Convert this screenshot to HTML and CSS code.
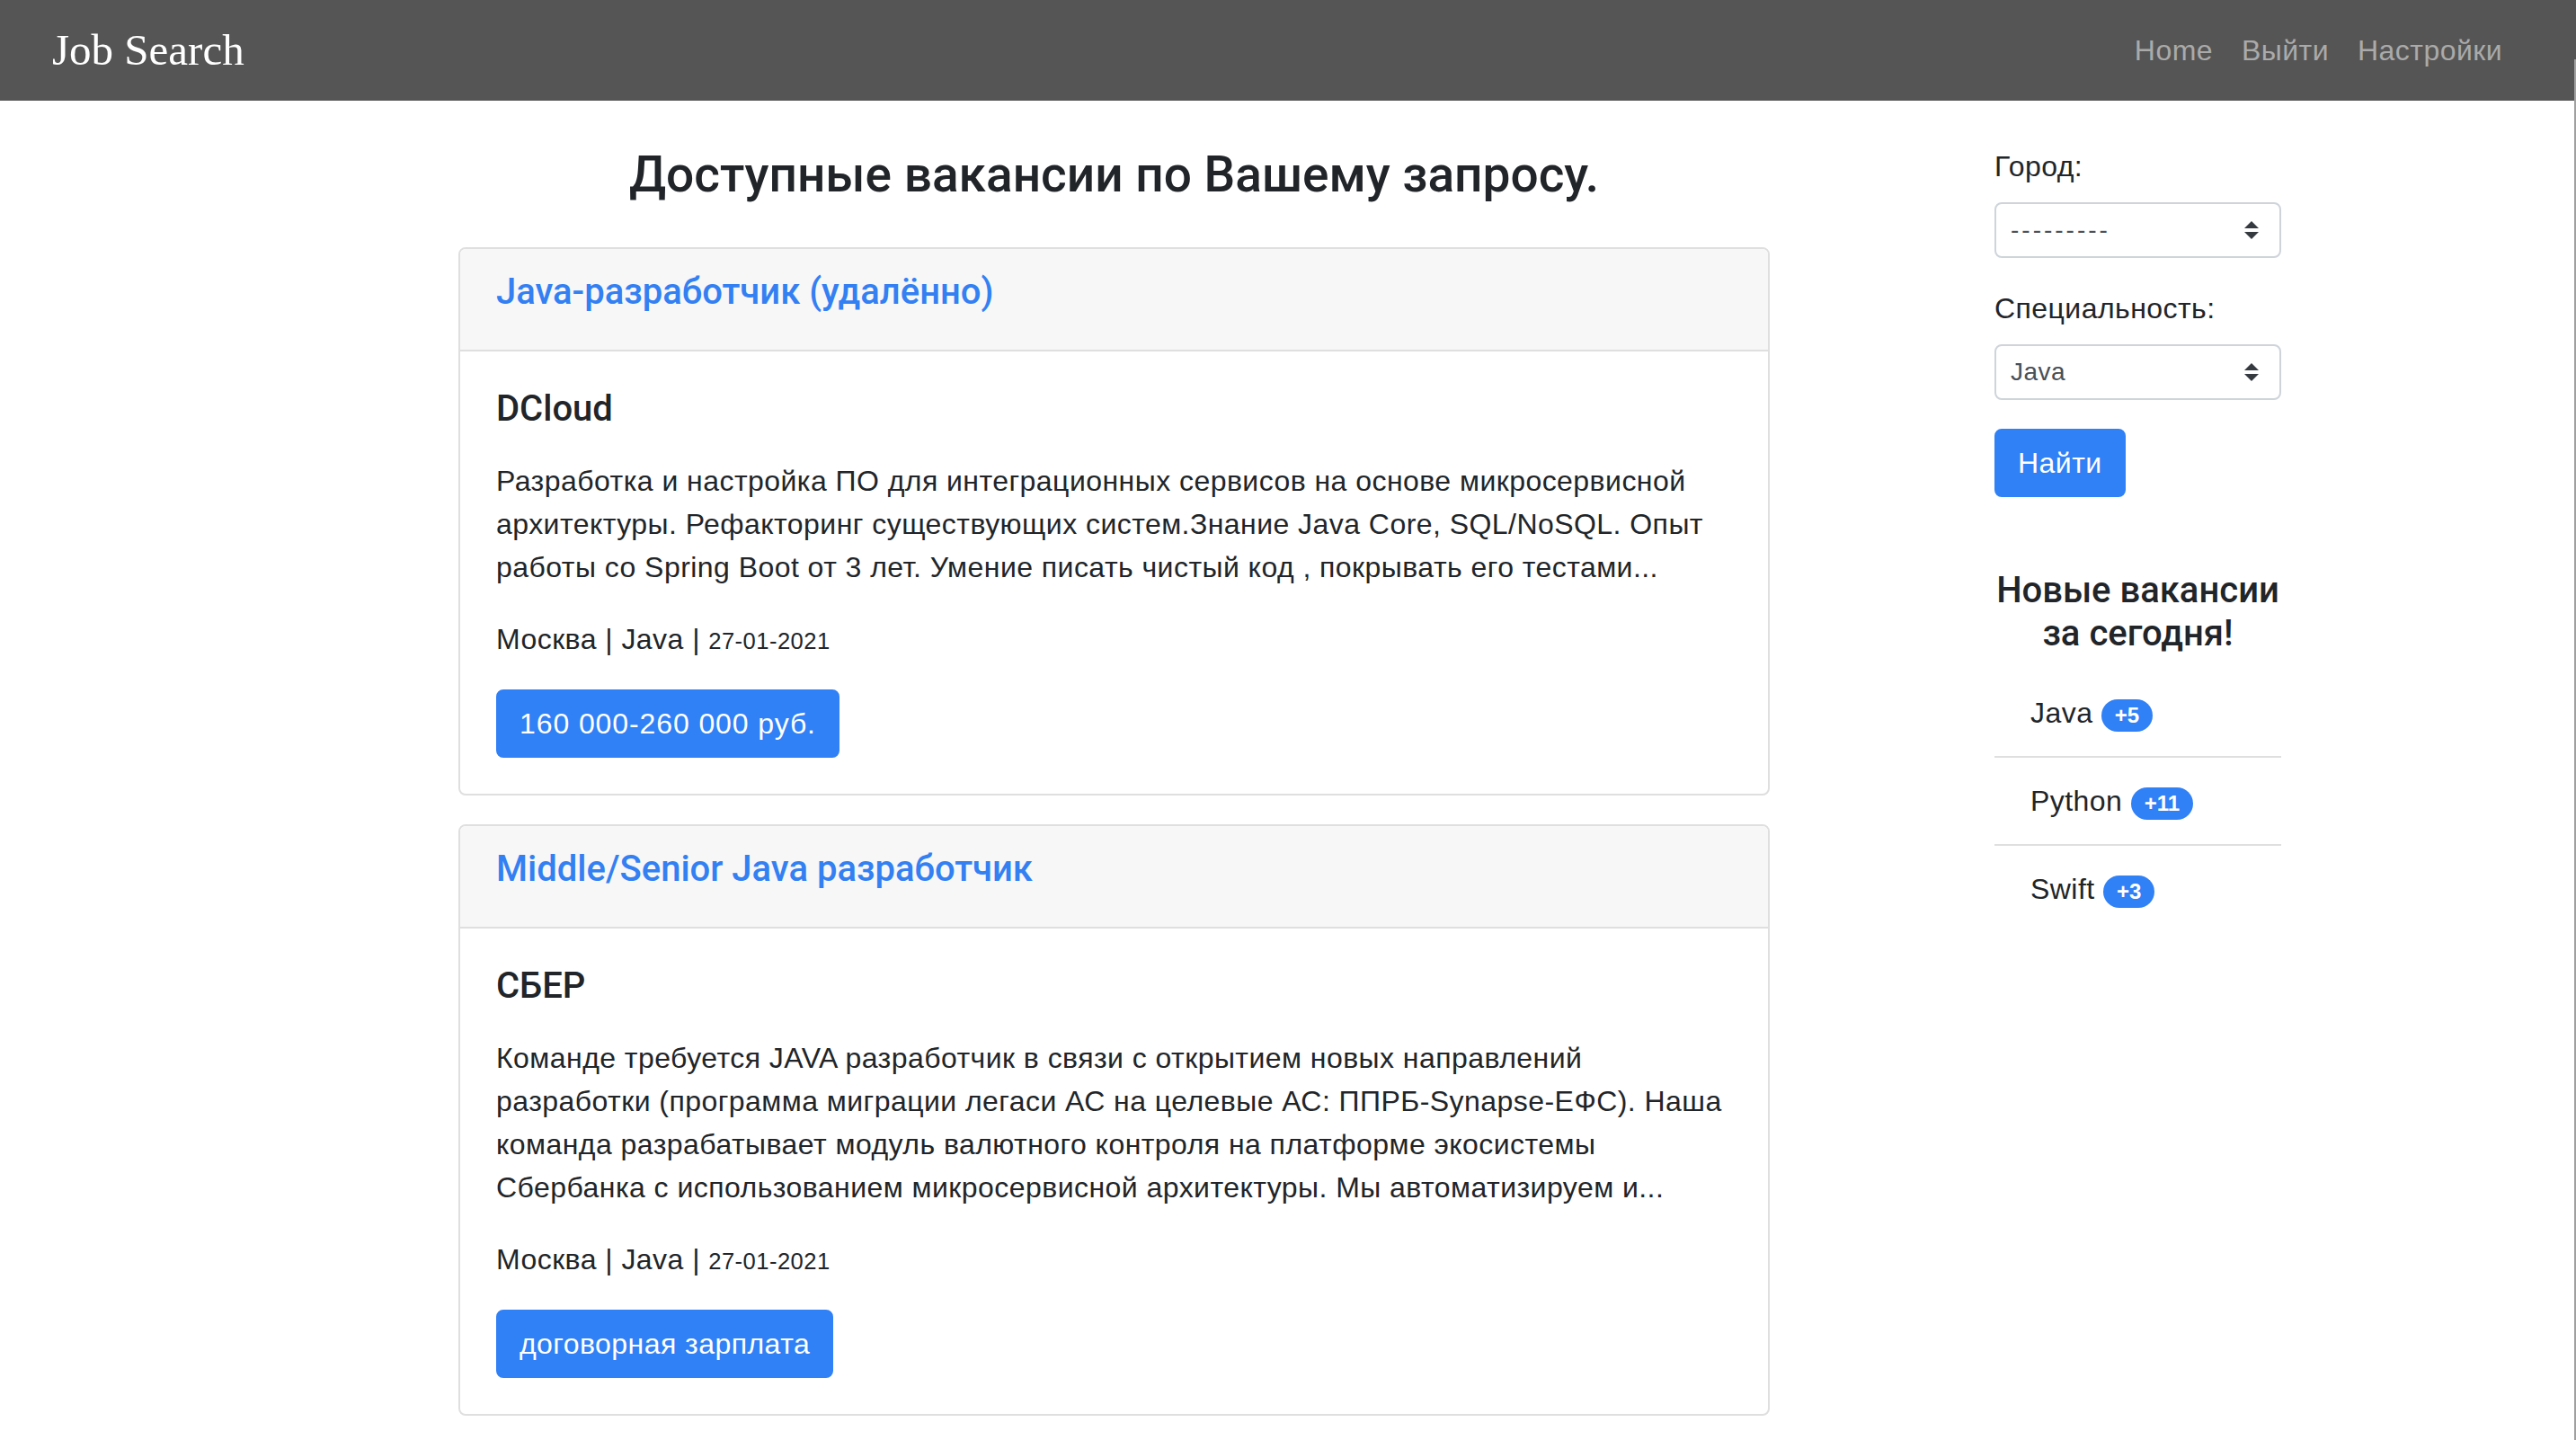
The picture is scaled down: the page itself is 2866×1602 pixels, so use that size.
FILE: index.html
```html
<!DOCTYPE html>
<html lang="ru">
<head>
<meta charset="utf-8">
<title>Job Search</title>
<link rel="stylesheet" href="styles.css">
</head>
<body>
<nav class="navbar">
  <a class="brand" href="#">Job Search</a>
  <ul class="nav">
    <li><a href="#">Home</a></li>
    <li><a href="#">Выйти</a></li>
    <li><a href="#">Настройки</a></li>
  </ul>
</nav>

<div class="layout">
  <main class="content">
    <h2 class="page-title">Доступные вакансии по Вашему запросу.</h2>

    <div class="card">
      <div class="card-header"><h5 class="card-title"><a href="#">Java-разработчик (удалённо)</a></h5></div>
      <div class="card-body">
        <h5 class="company">DCloud</h5>
        <p class="desc">Разработка и настройка ПО для интеграционных сервисов на основе микросервисной архитектуры. Рефакторинг существующих систем.Знание Java Core, SQL/NoSQL. Опыт работы со Spring Boot от 3 лет. Умение писать чистый код , покрывать его тестами...</p>
        <p class="meta">Москва | Java | <small>27-01-2021</small></p>
        <a class="btn btn-wide" href="#">160 000-260 000 руб.</a>
      </div>
    </div>

    <div class="card">
      <div class="card-header"><h5 class="card-title"><a href="#">Middle/Senior Java разработчик</a></h5></div>
      <div class="card-body">
        <h5 class="company">СБЕР</h5>
        <p class="desc">Команде требуется JAVA разработчик в связи с открытием новых направлений разработки (программа миграции легаси АС на целевые АС: ППРБ-Synapse-ЕФС). Наша команда разрабатывает модуль валютного контроля на платформе экосистемы Сбербанка с использованием микросервисной архитектуры. Мы автоматизируем и...</p>
        <p class="meta">Москва | Java | <small>27-01-2021</small></p>
        <a class="btn" href="#">договорная зарплата</a>
      </div>
    </div>
  </main>

  <aside class="sidebar">
    <form class="search">
      <div class="form-group">
        <label class="label">Город:</label>
        <div class="select"><span class="empty">---------</span>
          <svg class="arrows" width="16" height="20" viewBox="0 0 4 5"><path d="M2 0L0 2h4zm0 5L0 3h4z" fill="#343a40"/></svg>
        </div>
      </div>
      <div class="form-group">
        <label class="label">Специальность:</label>
        <div class="select"><span>Java</span>
          <svg class="arrows" width="16" height="20" viewBox="0 0 4 5"><path d="M2 0L0 2h4zm0 5L0 3h4z" fill="#343a40"/></svg>
        </div>
      </div>
      <a class="btn" href="#">Найти</a>
    </form>

    <h5 class="new-title">Новые вакансии за сегодня!</h5>
    <ul class="list">
      <li class="list-item">Java <span class="badge">+5</span></li>
      <li class="list-item">Python <span class="badge">+11</span></li>
      <li class="list-item">Swift <span class="badge">+3</span></li>
    </ul>
  </aside>
</div>
<div class="scrollbar"></div>
</body>
</html>
```

FILE: styles.css
```css
html, body {
  margin: 0;
  padding: 0;
  background: #fff;
}
body {
  font-family: "Liberation Sans", Arial, sans-serif;
  font-size: 32px;
  line-height: 48px;
  letter-spacing: 0.45px;
  color: #212529;
}
a { text-decoration: none; }

.navbar {
  height: 112px;
  background: #555555;
  display: flex;
  align-items: center;
  justify-content: space-between;
  padding: 0 66px 0 58px;
  box-sizing: border-box;
}
.brand {
  font-family: "Liberation Serif", "Times New Roman", serif;
  font-size: 49px;
  letter-spacing: 0;
  color: #fff;
  line-height: 1;
  margin-top: -2px;
}
.nav {
  list-style: none;
  margin: 0;
  padding: 0;
  display: flex;
}
.nav a {
  display: block;
  padding: 0 16px;
  color: #aaaaaa;
  font-size: 32px;
}

.layout {
  display: flex;
  align-items: flex-start;
  gap: 250px;
  padding: 49px 0 0 510px;
}
.content { width: 1459px; }
.sidebar { width: 319px; }

.page-title {
  font-family: Roboto, "Liberation Sans", sans-serif;
  font-weight: 500;
  font-size: 55px;
  line-height: 58px;
  letter-spacing: 0;
  text-align: center;
  margin: 4px 0 52px;
}

.card {
  border: 2px solid #dfdfdf;
  border-radius: 8px;
  overflow: hidden;
  margin-bottom: 32px;
}
.card-header {
  background: #f7f7f7;
  border-bottom: 2px solid #dfdfdf;
  padding: 24px 40px;
}
.card-title {
  font-family: Roboto, "Liberation Sans", sans-serif;
  font-weight: 500;
  font-size: 40px;
  line-height: 48px;
  letter-spacing: 0;
  margin: 0 0 16px;
}
.card-title a { color: #3380f3; }
.card-body { padding: 40px 28px 40px 40px; }
.company {
  font-family: Roboto, "Liberation Sans", sans-serif;
  font-weight: 500;
  font-size: 40px;
  line-height: 48px;
  letter-spacing: 0;
  margin: 0 0 32px;
}
.desc, .meta { margin: 0 0 32px; }
.meta small { font-size: 25.6px; line-height: 1; }

.btn {
  display: inline-block;
  background: #3080f6;
  color: #fff;
  border: 2px solid #3080f6;
  border-radius: 8px;
  padding: 12px 24px;
  font-size: 32px;
  line-height: 48px;
  vertical-align: top;
}
.btn-wide { letter-spacing: 0.9px; }

.form-group { margin-bottom: 32px; }
.label {
  display: block;
  margin-bottom: 16px;
}
.select {
  height: 62px;
  box-sizing: border-box;
  border: 2px solid #ced4da;
  border-radius: 8px;
  display: flex;
  align-items: center;
  justify-content: space-between;
  padding: 0 23px 0 16px;
  font-size: 28px;
  color: #495057;
}
.empty { letter-spacing: 3px; }
.arrows { display: block; }

.new-title {
  font-family: Roboto, "Liberation Sans", sans-serif;
  font-weight: 500;
  font-size: 40px;
  line-height: 48px;
  letter-spacing: 0;
  text-align: center;
  margin: 80px 0 16px;
}
.list {
  list-style: none;
  margin: 0;
  padding: 0;
}
.list-item {
  padding: 24px 40px;
  border-bottom: 2px solid #dfdfdf;
}
.list-item:last-child { border-bottom: 0; }
.badge {
  display: inline-block;
  background: #3080f6;
  color: #fff;
  font-size: 24px;
  font-weight: 700;
  line-height: 1;
  letter-spacing: 0;
  padding: 6px 15px;
  border-radius: 20px;
  vertical-align: baseline;
}

.scrollbar {
  position: fixed;
  top: 66px;
  right: 0;
  bottom: 0;
  width: 2px;
  background: #a0a0a0;
}
```
